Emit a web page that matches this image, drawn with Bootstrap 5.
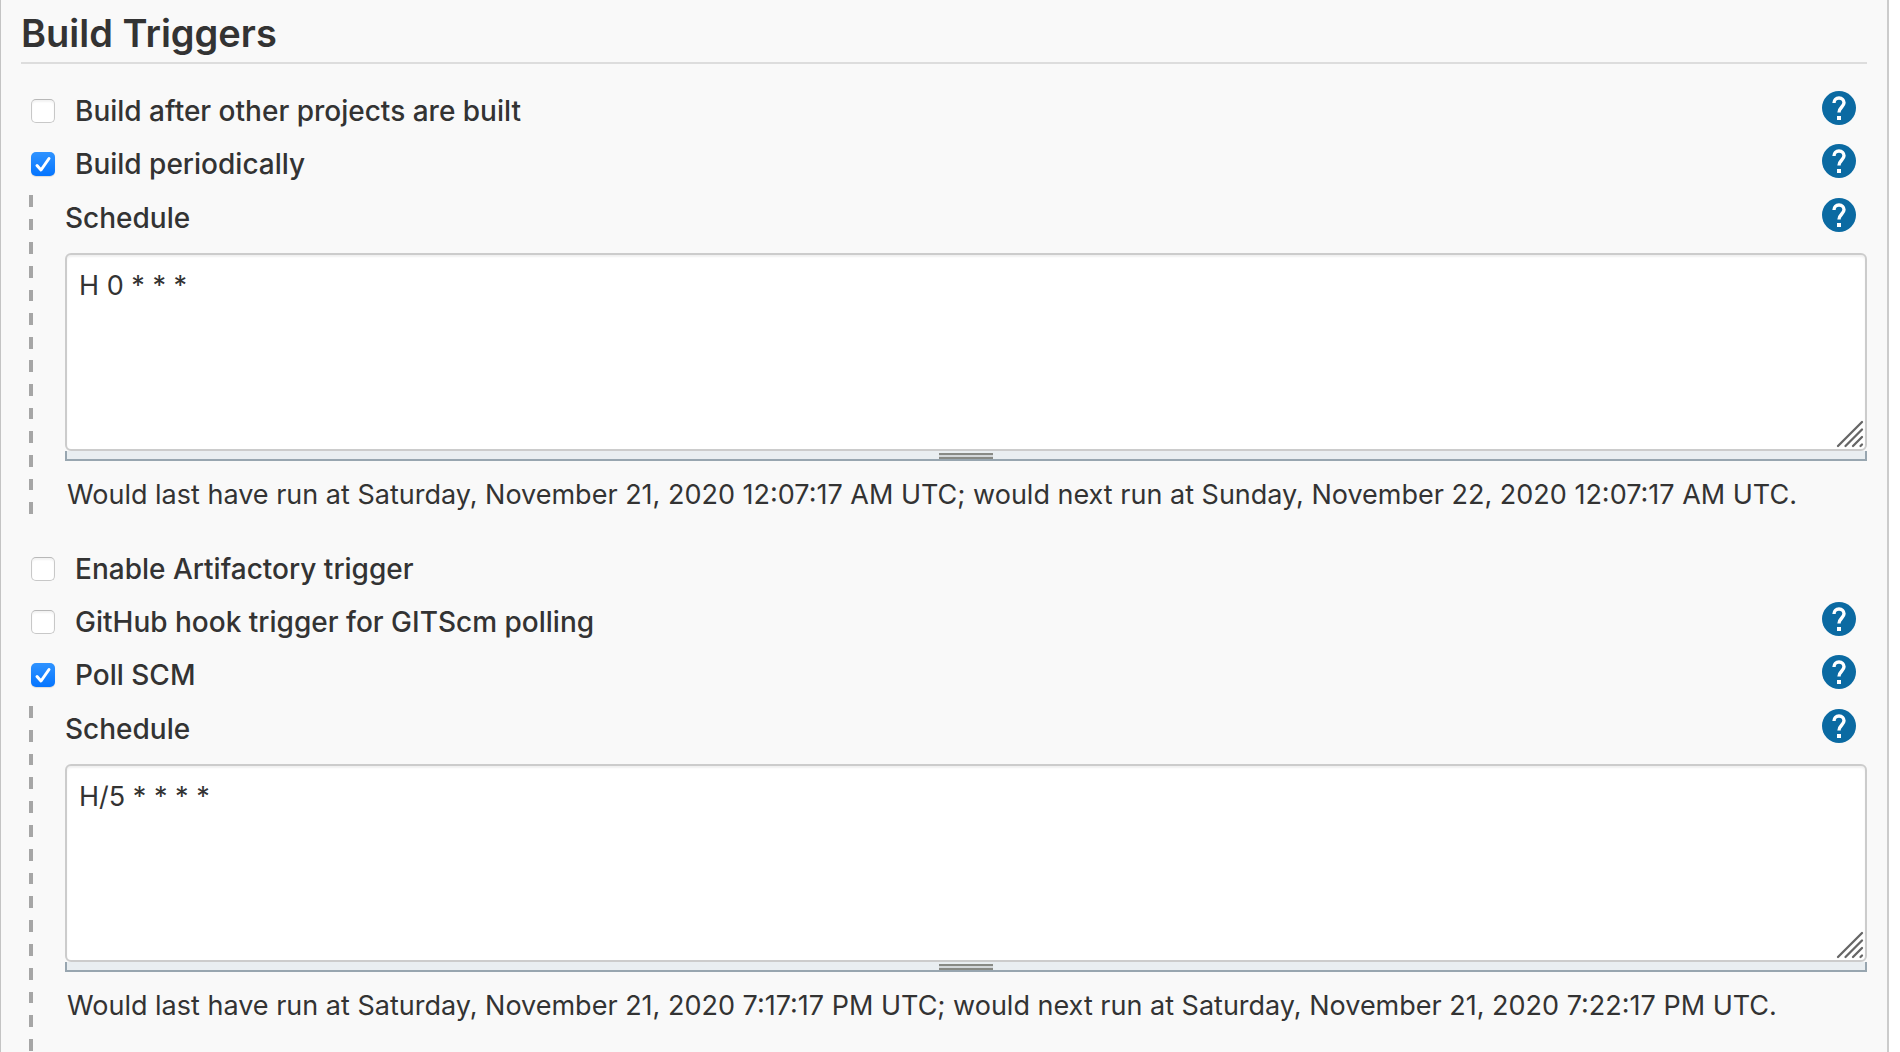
<!DOCTYPE html>
<html lang="en">
<head>
<meta charset="utf-8">
<meta name="viewport" content="width=device-width, initial-scale=1">
<title>Build Triggers</title>
<link href="https://cdn.jsdelivr.net/npm/bootstrap@5.3.0/dist/css/bootstrap.min.css" rel="stylesheet">
<style>
body { background: #fff; color: #333; font-family: Inter, "Liberation Sans", sans-serif; font-size: 27px; line-height: 40px; }
.config-panel { min-height: 100vh; margin-right: 11px; padding: 0 20px; background: #f9f9f9; border-left: 1px solid #c4c4c4; border-right: 2px solid #ccc; }
.section-title { height: 64px; padding-top: 9px; margin-bottom: 20px; border-bottom: 2px solid #ddd; font-size: 38px; line-height: 48px; font-weight: 600; }
.trigger-row { height: 53px; padding: 0 11px 0 10px; }
.trigger-row label, .schedule-row label { font-size: 28px; font-weight: 500; }
.trigger-check.form-check-input { width: 24px; height: 24px; margin: 0 20px 0 0; border: 1px solid #c8c8c8; border-top-color: #b8b8b8; border-radius: 5px; background-color: #fff; box-shadow: inset 0 2px 2px #0000000d; }
.trigger-check.form-check-input:checked { border: 0; box-shadow: 0 1px 1px #0000001f;
  background-image: url("data:image/svg+xml,%3Csvg xmlns='http://www.w3.org/2000/svg' viewBox='0 0 24 24'%3E%3Cpath d='M6 13.500l4 4.500L18 6.500' fill='none' stroke='white' stroke-width='3' stroke-linecap='round' stroke-linejoin='round'/%3E%3C/svg%3E"), linear-gradient(#2f93ff, #0575ff); }
.help-btn { width: 34px; height: 34px; margin-bottom: 6px; }
.help-btn svg { display: block; }
.nested { --dashes: 14; position: relative; margin: 5px 0 28px 8px; padding-left: 36px; }
.nested::before { content: ""; position: absolute; left: 0; top: 0; bottom: 0; width: 4px;
  background: repeating-linear-gradient(#a6a6a6 0 calc(100% / (2 * var(--dashes) - 1)), transparent 0 calc(200% / (2 * var(--dashes) - 1))); }
.nested-last { --dashes: 15; margin-bottom: 0; padding-bottom: 26px; }
.schedule-row { height: 45px; margin-bottom: 13px; padding-right: 11px; }
.schedule-box.form-control { height: 198px; padding: 11px 12px; resize: none; overflow: hidden; color: #333; font-size: 27px; line-height: 40px; background: #fff; border: 2px solid #ccc; border-radius: 6px; box-shadow: inset 0 2px 2px #0000000f; }
.corner-grip { position: absolute; right: 3px; bottom: 3px; }
.drag-bar { height: 10px; background: #e9eef1; border: 2px solid #98a6b0; border-top: 0; }
.drag-bar span { width: 54px; height: 6px; margin-top: 2px; background: linear-gradient(#888a85 0 2px, #d3d7d9 2px 4px, #888a85 4px); }
.run-note { height: 53px; padding: 14px 0 0 2px; }
</style>
<script src="https://cdn.jsdelivr.net/npm/bootstrap@5.3.0/dist/js/bootstrap.bundle.min.js"></script>
</head>
<body>
<svg class="d-none" aria-hidden="true">
  <symbol id="help" viewBox="0 0 34 34"><circle cx="17" cy="17" r="17" fill="#0b6aa2"/><path d="M12 12c0-3 2-5 5-5s5 2 5 4.800c0 4-5 4.600-5 9.800" fill="none" stroke="#fff" stroke-width="3.400"/><path d="M15 25h4v4h-4z" fill="#fff"/></symbol>
  <symbol id="grip" viewBox="0 0 28 28"><path d="M2 26L26 2M9.500 26l16.500-16.500M17 26l9-9M24.500 26l1.500-1.500" fill="none" stroke="#666" stroke-width="2.300" stroke-linecap="round"/></symbol>
</svg>
<main class="config-panel">
  <h1 class="section-title">Build Triggers</h1>

  <div class="trigger-row d-flex align-items-center">
    <input class="form-check-input trigger-check" type="checkbox" id="after">
    <label for="after">Build after other projects are built</label>
    <button type="button" class="btn p-0 border-0 ms-auto help-btn" aria-label="Help"><svg width="34" height="34"><use href="#help"/></svg></button>
  </div>
  <div class="trigger-row d-flex align-items-center">
    <input class="form-check-input trigger-check" type="checkbox" id="periodic" checked>
    <label for="periodic">Build periodically</label>
    <button type="button" class="btn p-0 border-0 ms-auto help-btn" aria-label="Help"><svg width="34" height="34"><use href="#help"/></svg></button>
  </div>
  <section class="nested">
    <div class="schedule-row d-flex align-items-center">
      <label for="schedule1">Schedule</label>
      <button type="button" class="btn p-0 border-0 ms-auto help-btn" aria-label="Help"><svg width="34" height="34"><use href="#help"/></svg></button>
    </div>
    <div class="position-relative">
      <textarea class="form-control schedule-box" id="schedule1" spellcheck="false">H 0 * * *</textarea>
      <svg class="corner-grip" width="28" height="28" aria-hidden="true"><use href="#grip"/></svg>
    </div>
    <div class="drag-bar d-flex justify-content-center"><span></span></div>
    <div class="run-note">Would last have run at Saturday, November 21, 2020 12:07:17 AM UTC; would next run at Sunday, November 22, 2020 12:07:17 AM UTC.</div>
  </section>

  <div class="trigger-row d-flex align-items-center">
    <input class="form-check-input trigger-check" type="checkbox" id="artifactory">
    <label for="artifactory">Enable Artifactory trigger</label>
  </div>
  <div class="trigger-row d-flex align-items-center">
    <input class="form-check-input trigger-check" type="checkbox" id="github">
    <label for="github">GitHub hook trigger for GITScm polling</label>
    <button type="button" class="btn p-0 border-0 ms-auto help-btn" aria-label="Help"><svg width="34" height="34"><use href="#help"/></svg></button>
  </div>
  <div class="trigger-row d-flex align-items-center">
    <input class="form-check-input trigger-check" type="checkbox" id="poll" checked>
    <label for="poll">Poll SCM</label>
    <button type="button" class="btn p-0 border-0 ms-auto help-btn" aria-label="Help"><svg width="34" height="34"><use href="#help"/></svg></button>
  </div>
  <section class="nested nested-last">
    <div class="schedule-row d-flex align-items-center">
      <label for="schedule2">Schedule</label>
      <button type="button" class="btn p-0 border-0 ms-auto help-btn" aria-label="Help"><svg width="34" height="34"><use href="#help"/></svg></button>
    </div>
    <div class="position-relative">
      <textarea class="form-control schedule-box" id="schedule2" spellcheck="false">H/5 * * * *</textarea>
      <svg class="corner-grip" width="28" height="28" aria-hidden="true"><use href="#grip"/></svg>
    </div>
    <div class="drag-bar d-flex justify-content-center"><span></span></div>
    <div class="run-note">Would last have run at Saturday, November 21, 2020 7:17:17 PM UTC; would next run at Saturday, November 21, 2020 7:22:17 PM UTC.</div>
  </section>
</main>
</body>
</html>
